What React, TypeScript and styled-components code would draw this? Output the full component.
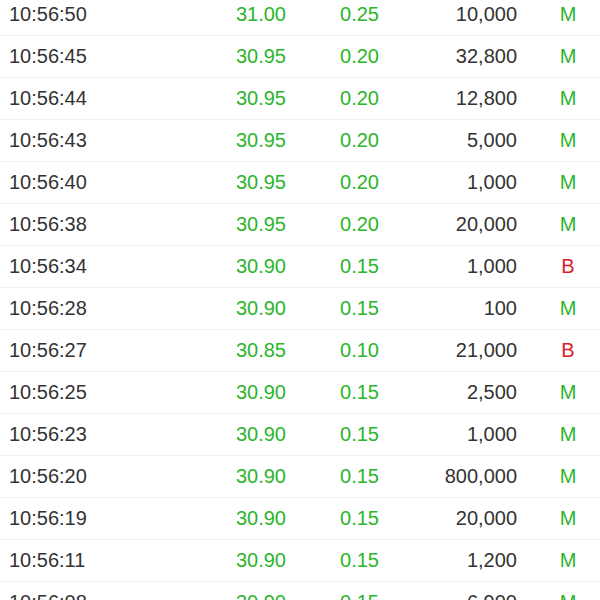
import { FC } from "react";
import styled, { createGlobalStyle } from "styled-components";

type Trade = {
  time: string;
  price: string;
  change: string;
  volume: string;
  flag: "M" | "B";
};

const trades: Trade[] = [
  { time: "10:56:50", price: "31.00", change: "0.25", volume: "10,000", flag: "M" },
  { time: "10:56:45", price: "30.95", change: "0.20", volume: "32,800", flag: "M" },
  { time: "10:56:44", price: "30.95", change: "0.20", volume: "12,800", flag: "M" },
  { time: "10:56:43", price: "30.95", change: "0.20", volume: "5,000", flag: "M" },
  { time: "10:56:40", price: "30.95", change: "0.20", volume: "1,000", flag: "M" },
  { time: "10:56:38", price: "30.95", change: "0.20", volume: "20,000", flag: "M" },
  { time: "10:56:34", price: "30.90", change: "0.15", volume: "1,000", flag: "B" },
  { time: "10:56:28", price: "30.90", change: "0.15", volume: "100", flag: "M" },
  { time: "10:56:27", price: "30.85", change: "0.10", volume: "21,000", flag: "B" },
  { time: "10:56:25", price: "30.90", change: "0.15", volume: "2,500", flag: "M" },
  { time: "10:56:23", price: "30.90", change: "0.15", volume: "1,000", flag: "M" },
  { time: "10:56:20", price: "30.90", change: "0.15", volume: "800,000", flag: "M" },
  { time: "10:56:19", price: "30.90", change: "0.15", volume: "20,000", flag: "M" },
  { time: "10:56:11", price: "30.90", change: "0.15", volume: "1,200", flag: "M" },
  { time: "10:56:08", price: "30.90", change: "0.15", volume: "6,900", flag: "M" },
];

const GREEN = "#2bb52b";
const RED = "#d81e2a";

const GlobalStyle = createGlobalStyle`
  html, body {
    margin: 0;
    padding: 0;
    background: #ffffff;
    overflow: hidden;
  }
  body {
    font-family: "Liberation Sans", Arial, sans-serif;
  }
`;

const App: FC = () => {
  return (
    <>
      <GlobalStyle />
      <Viewport>
        <List>
          {trades.map((t, i) => (
            <Row key={i}>
              <Time>{t.time}</Time>
              <Num color={GREEN}>{t.price}</Num>
              <Num color={GREEN}>{t.change}</Num>
              <Num color="#333333">{t.volume}</Num>
              <Flag color={t.flag === "B" ? RED : GREEN}>{t.flag}</Flag>
            </Row>
          ))}
        </List>
      </Viewport>
    </>
  );
};

export default App;

const Viewport = styled.div({
  width: "600px",
  height: "600px",
  overflow: "hidden",
});

// list is scrolled a little, so the first row is cut at the top
const List = styled.div({
  marginTop: "-6px",
  display: "flex",
  flexDirection: "column",
});

const Row = styled.div({
  display: "grid",
  gridTemplateColumns: "150px 127px 93px 138px 1fr",
  alignItems: "center",
  height: "41px",
  paddingLeft: "9px",
  borderBottom: "1px solid #f0f0f0",
  fontSize: "20px",
  lineHeight: "41px",
});

const Time = styled.div({
  color: "#333333",
});

const Num = styled.div<{ color: string }>(({ color }) => ({
  color,
  textAlign: "right",
}));

const Flag = styled.div<{ color: string }>(({ color }) => ({
  color,
  textAlign: "center",
  paddingLeft: "19px",
}));
